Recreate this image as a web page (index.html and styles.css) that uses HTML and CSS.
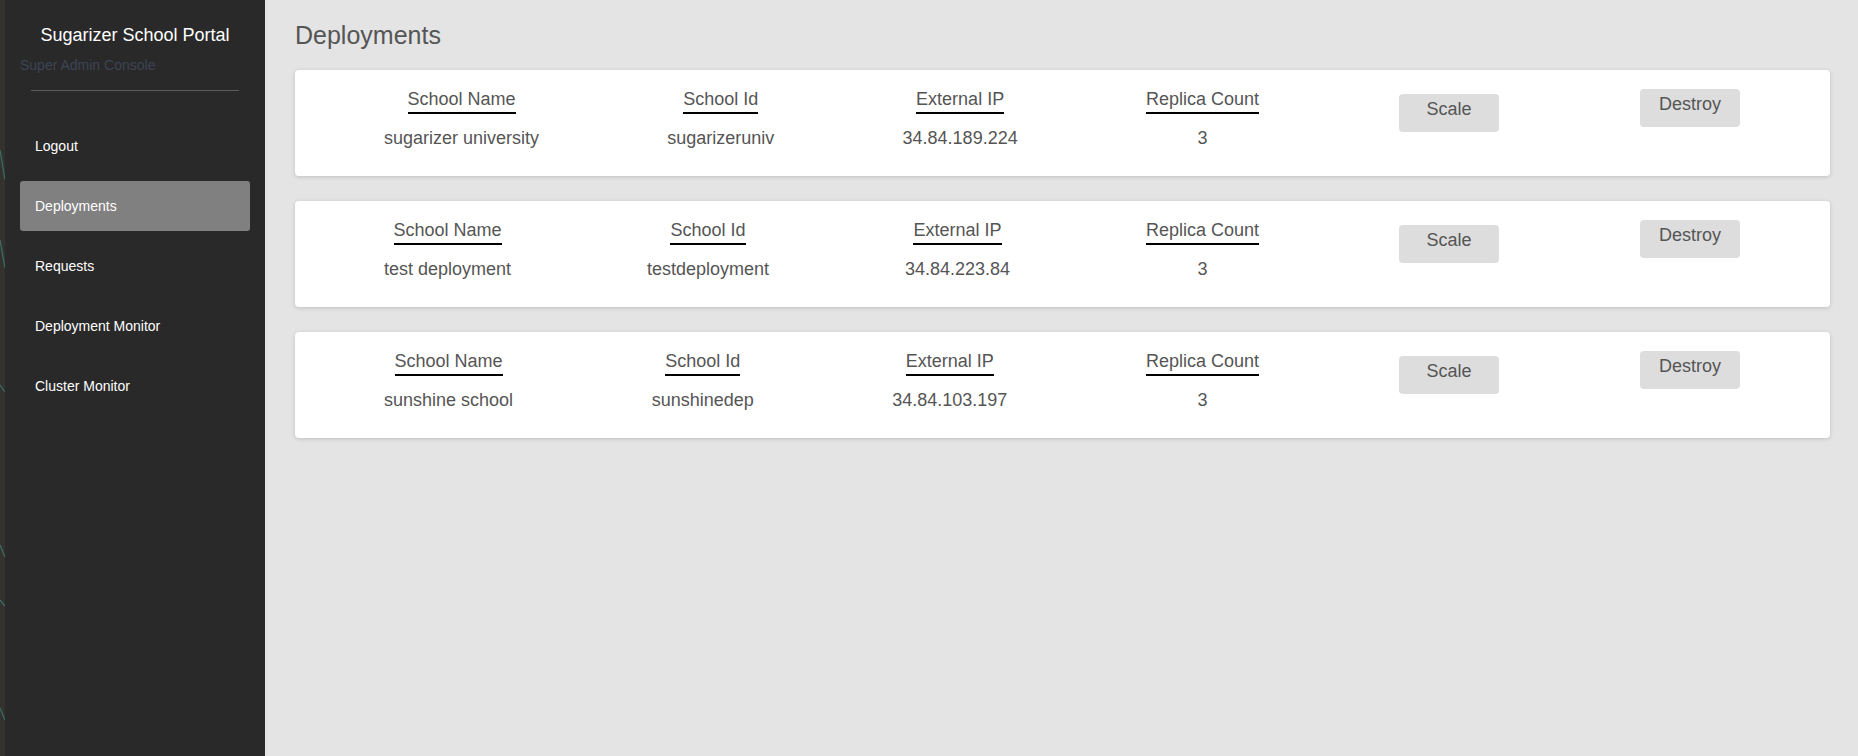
FILE: index.html
```html
<!DOCTYPE html>
<html lang="en">
<head>
<meta charset="utf-8">
<title>Sugarizer School Portal</title>
<link rel="stylesheet" href="styles.css">
</head>
<body>
<div class="app">
  <div class="edge">
    <svg class="edge-art" width="5" height="756" viewBox="0 0 5 756" aria-hidden="true">
      <path d="M0 150 L5 180 M0 240 L5 268 M0 385 L5 392 M0 545 L5 557 M0 600 L5 606 M0 708 L5 720" stroke="#3a6f66" stroke-width="1.2" fill="none"/>
    </svg>
  </div>
  <aside class="sidebar">
    <div class="brand">Sugarizer School Portal</div>
    <div class="subtitle">Super Admin Console</div>
    <hr class="divider">
    <nav class="nav">
      <a class="nav-item">Logout</a>
      <a class="nav-item active">Deployments</a>
      <a class="nav-item">Requests</a>
      <a class="nav-item">Deployment Monitor</a>
      <a class="nav-item">Cluster Monitor</a>
    </nav>
  </aside>
  <main class="main">
    <h1 class="page-title">Deployments</h1>

    <div class="card">
      <div class="info">
        <div class="col"><span class="col-head">School Name</span><span class="col-val">sugarizer university</span></div>
        <div class="col"><span class="col-head">School Id</span><span class="col-val">sugarizeruniv</span></div>
        <div class="col"><span class="col-head">External IP</span><span class="col-val">34.84.189.224</span></div>
        <div class="col"><span class="col-head">Replica Count</span><span class="col-val">3</span></div>
      </div>
      <div class="actions">
        <button class="btn btn-scale">Scale</button>
        <button class="btn btn-destroy">Destroy</button>
      </div>
    </div>

    <div class="card">
      <div class="info">
        <div class="col"><span class="col-head">School Name</span><span class="col-val">test deployment</span></div>
        <div class="col"><span class="col-head">School Id</span><span class="col-val">testdeployment</span></div>
        <div class="col"><span class="col-head">External IP</span><span class="col-val">34.84.223.84</span></div>
        <div class="col"><span class="col-head">Replica Count</span><span class="col-val">3</span></div>
      </div>
      <div class="actions">
        <button class="btn btn-scale">Scale</button>
        <button class="btn btn-destroy">Destroy</button>
      </div>
    </div>

    <div class="card">
      <div class="info">
        <div class="col"><span class="col-head">School Name</span><span class="col-val">sunshine school</span></div>
        <div class="col"><span class="col-head">School Id</span><span class="col-val">sunshinedep</span></div>
        <div class="col"><span class="col-head">External IP</span><span class="col-val">34.84.103.197</span></div>
        <div class="col"><span class="col-head">Replica Count</span><span class="col-val">3</span></div>
      </div>
      <div class="actions">
        <button class="btn btn-scale">Scale</button>
        <button class="btn btn-destroy">Destroy</button>
      </div>
    </div>
  </main>
</div>
</body>
</html>
```

FILE: styles.css
```css
* { box-sizing: border-box; }

html, body {
  margin: 0;
  padding: 0;
  height: 100%;
}

body {
  font-family: "Liberation Sans", Arial, sans-serif;
  background: #e4e4e4;
  overflow: hidden;
}

.app {
  display: flex;
  height: 756px;
}

.edge {
  flex: 0 0 5px;
  background: #34322f;
}

.edge-art {
  display: block;
}

.sidebar {
  flex: 0 0 260px;
  background: #292929;
  padding: 25px 15px 0;
  display: flex;
  flex-direction: column;
}

.brand {
  font-size: 18px;
  line-height: 20px;
  color: #ffffff;
  text-align: center;
}

.subtitle {
  margin-top: 12px;
  font-size: 14px;
  line-height: 16px;
  color: #3d4455;
}

.divider {
  width: 208px;
  margin: 17px auto 0;
  border: 0;
  border-top: 1px solid #5c5c5c;
  height: 0;
}

.nav {
  margin-top: 30px;
  display: flex;
  flex-direction: column;
  gap: 10px;
}

.nav-item {
  display: block;
  height: 50px;
  line-height: 50px;
  padding: 0 15px;
  font-size: 14px;
  color: #ffffff;
  border-radius: 3px;
  text-decoration: none;
}

.nav-item.active {
  background: #808080;
}

.main {
  flex: 1 1 auto;
  padding: 21px 28px 0 30px;
}

.page-title {
  margin: 0 0 20px;
  font-size: 25px;
  line-height: 29px;
  font-weight: normal;
  color: #555555;
}

.card {
  display: flex;
  align-items: flex-start;
  background: #ffffff;
  border-radius: 4px;
  box-shadow: 0 1px 4px rgba(0, 0, 0, 0.16);
  padding: 19px 0 27px 89px;
  margin-bottom: 25px;
}

.info {
  flex: 0 0 875px;
  display: flex;
  justify-content: space-between;
}

.col {
  display: flex;
  flex-direction: column;
  align-items: center;
  font-size: 18px;
  line-height: 21px;
  color: #555555;
}

.col-head {
  padding-bottom: 2px;
  border-bottom: 2px solid #000000;
}

.col-val {
  margin-top: 14px;
}

.actions {
  display: flex;
  align-items: flex-start;
  gap: 141px;
  margin-left: 140px;
}

.btn {
  width: 100px;
  padding: 5px 0 12px;
  font-family: "Liberation Sans", Arial, sans-serif;
  font-size: 18px;
  line-height: 21px;
  color: #555555;
  background: #dddddd;
  border: 0;
  border-radius: 4px;
  text-align: center;
}

.btn-scale {
  margin-top: 5px;
}

.btn-destroy {
  margin-top: 0;
}
```
